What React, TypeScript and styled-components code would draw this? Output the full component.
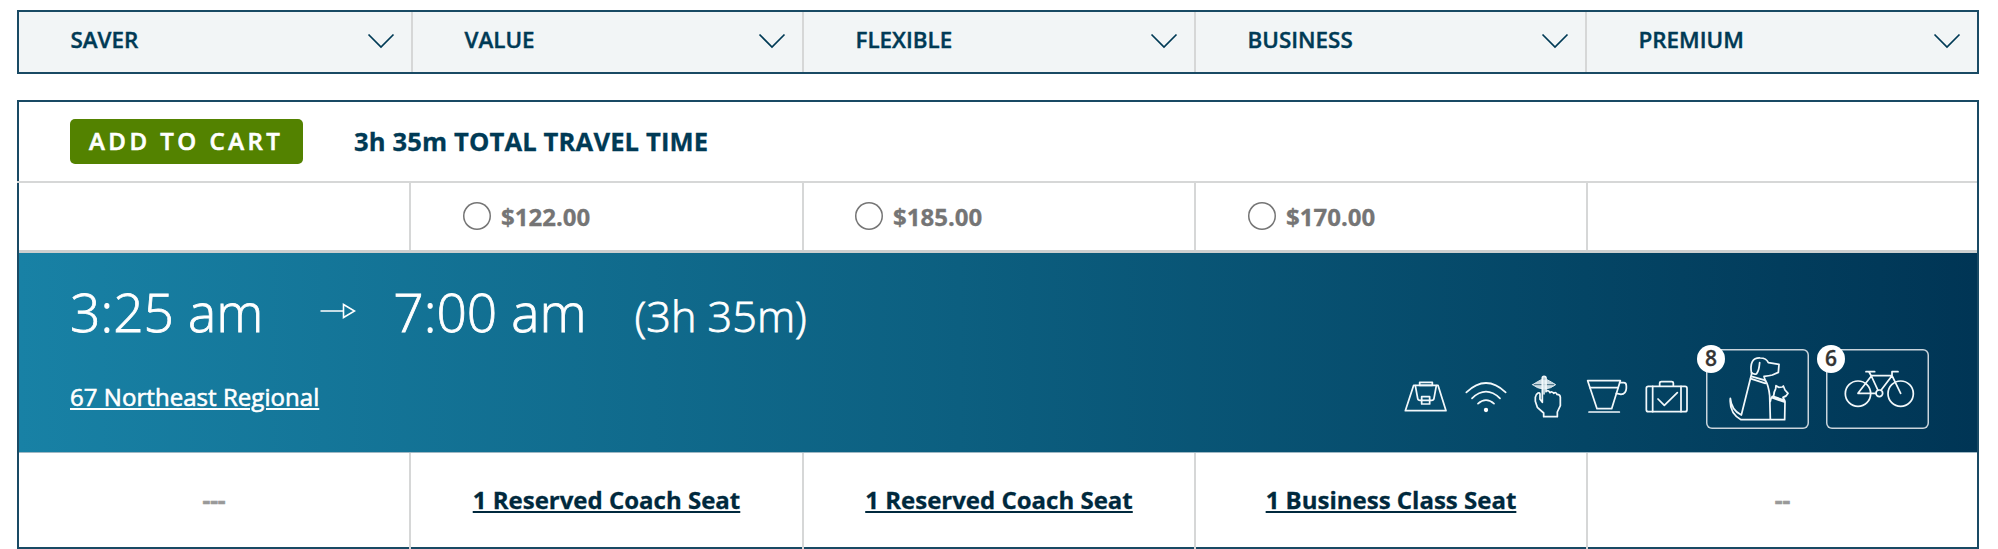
import React from "react";
import styled, { createGlobalStyle } from "styled-components";

const navy = "#003a55";
const rule = "#d6d7d7";

const GlobalStyle = createGlobalStyle`
  *, *::before, *::after { box-sizing: border-box; }
  body {
    margin: 0;
    background: #fff;
    font-family: "Open Sans", "Noto Sans", sans-serif;
    color: ${navy};
    -webkit-text-stroke-width: 0.3px;
  }
`;

const Page = styled.main`
  height: 549px;
  padding: 10px 19px 0 17px;
  overflow: hidden;
`;

const FareHeader = styled.header`
  display: grid;
  grid-template-columns: 394px 391px 392px 391px 1fr;
  height: 64px;
  border: 2px solid #194a64;
  background: #f2f5f6;
`;

const FareTab = styled.button`
  display: flex;
  align-items: center;
  justify-content: space-between;
  padding: 0 16px 5px 51.5px;
  border: 0;
  border-right: 2px solid ${rule};
  background: none;
  color: ${navy};
  font: 600 22.4px/30px "Open Sans", sans-serif;
  -webkit-text-stroke-width: 0.4px;
  &:last-child { border-right: 0; }
`;

const Chevron = styled.svg`
  width: 28px;
  height: 16px;
  margin-top: 3px;
`;

const Trip = styled.section`
  margin-top: 26px;
  height: 449px;
  border: 2px solid #194a64;
  display: flex;
  flex-direction: column;
`;

const Summary = styled.div`
  display: flex;
  align-items: center;
  flex: none;
  height: 81px;
  margin-left: -2px;
  padding: 0 52px 0 53px;
  border-bottom: 2px solid ${rule};
`;

const CartButton = styled.button`
  width: 233px;
  height: 45px;
  margin-bottom: 1px;
  padding: 0 0 1px 19px;
  border: 0;
  border-radius: 5px;
  background: #538200;
  color: #fff;
  font: 600 24px/40px "Open Sans", sans-serif;
  letter-spacing: 3.5px;
  text-align: left;
  white-space: nowrap;
  -webkit-text-stroke-width: 0.6px;
`;

const TravelTime = styled.h2`
  margin: 0 0 0 51px;
  font-size: 25.6px;
  line-height: 34px;
  font-weight: 700;
  letter-spacing: 0.13px;
`;

const ColumnRow = styled.div<{ $height: number }>`
  display: grid;
  grid-template-columns: 392px 393px 392px 392px 1fr;
  flex: none;
  height: ${(p) => p.$height}px;
`;

const PriceRow = styled(ColumnRow)`
  border-bottom: 3px solid #cccfcf;
`;

const PriceCell = styled.label`
  display: flex;
  align-items: center;
  gap: 10px;
  padding: 0 0 1px 52px;
  border-right: 2px solid ${rule};
  color: #757575;
  font-size: 24px;
  font-weight: 700;
  &:nth-child(3) { padding-left: 51px; }
  &:last-child { border-right: 0; }
`;

const Radio = styled.span`
  width: 28px;
  height: 28px;
  box-shadow: inset 0 0 0 1.5px #757575;
  border-radius: 50%;
`;

const Hero = styled.div`
  flex: none;
  height: 200px;
  padding: 0 48px 0 51px;
  background: linear-gradient(90deg, #1881a5 0%, #0c5f80 48%, #044565 80%, #003555 100%);
  border-bottom: 1px solid #9fb8c4;
  color: #fff;
  display: flex;
  justify-content: space-between;
`;

const Schedule = styled.div`
  display: flex;
  flex-direction: column;
  padding-top: 20px;
`;

const Times = styled.div`
  display: flex;
  align-items: baseline;
  font-weight: 300;
  font-size: 53.33px;
  line-height: 78px;
  white-space: nowrap;
  -webkit-text-stroke-width: 0.8px;
`;

const Arrow = styled.svg`
  width: 36px;
  height: 16px;
  margin: 0 37px 7px 57px;
  align-self: center;
`;

const Duration = styled.span`
  margin-left: 48px;
  font-size: 43.2px;
`;

const TrainLink = styled.a`
  margin-top: 25px;
  align-self: flex-start;
  font-size: 24px;
  line-height: 33px;
  letter-spacing: 0.05px;
  text-decoration: underline;
  text-decoration-thickness: 2px;
  text-underline-offset: 2px;
  -webkit-text-stroke-width: 0.6px;
`;

const Amenities = styled.div`
  display: flex;
  margin-top: 96px;
  height: 80px;
`;

const Glyph = styled.svg`
  width: 60px;
  height: 80px;
  fill: none;
  stroke: #f2f8fb;
  stroke-width: 5.2;
  stroke-linejoin: round;
  stroke-linecap: round;
`;

const CountBox = styled.div`
  position: relative;
  width: 103px;
  height: 80px;
  margin-left: 17px;
  box-shadow: inset 0 0 0 1.5px #c9d4dc;
  border-radius: 6px;
  &:first-of-type { margin-left: 10px; }
`;

const BoxGlyph = styled(Glyph)`
  display: block;
  width: 103px;
  height: 80px;
`;

const Count = styled.span`
  position: absolute;
  left: -9px;
  top: -4px;
  width: 28px;
  height: 28px;
  border-radius: 50%;
  background: #fff;
  color: #333;
  font-size: 21px;
  line-height: 27px;
  font-weight: 600;
  text-align: center;
`;

const SeatCell = styled.div`
  display: flex;
  align-items: center;
  justify-content: center;
  padding: 0 0 4px;
  border-right: 2px solid ${rule};
  font-size: 24px;
  font-weight: 700;
  &:last-child { border-right: 0; }
`;

const SeatLink = styled.a`
  color: #00293d;
  text-decoration: underline;
  text-decoration-thickness: 2px;
  text-underline-offset: 2px;
`;

const Unavailable = styled.span`
  color: #999;
  -webkit-text-stroke-width: 0.6px;
`;

const fares = ["SAVER", "VALUE", "FLEXIBLE", "BUSINESS", "PREMIUM"];
const prices = ["", "$122.00", "$185.00", "$170.00", ""];
const seats = ["---", "1 Reserved Coach Seat", "1 Reserved Coach Seat", "1 Business Class Seat", "--"];

const BagIcon = () => (
  <Glyph viewBox="18 27 180 240">
    <path d="M71 136H144L168 212H46Z" />
    <rect x="89" y="127" width="38" height="9" />
    <path d="M76 137L83 175Q84 181 90 181H95M139 137L132 175Q131 181 125 181H120" />
    <rect x="95" y="170" width="24" height="22" />
    <path d="M95 181H119" />
  </Glyph>
);

const WifiIcon = () => (
  <Glyph viewBox="198 27 180 240">
    <path d="M229 157Q288 101 347 157M246 175Q288 135 330 175M264 191Q288 170 312 191" />
    <circle cx="288" cy="210" r="6.5" fill="#fff" stroke="none" />
  </Glyph>
);

const QuietIcon = () => (
  <Glyph viewBox="378 27 180 240">
    <path d="M428 134Q442 125 454 119Q462 126 471 119Q483 125 497 134Q483 146 462 147Q441 146 428 134Z" fill="#c8d9e2" stroke="#dbe8ef" strokeWidth="3" />
    <path d="M433 134H491" stroke="#25536e" strokeWidth="2.5" />
    <path d="M457 187V114Q457 109 462 109Q468 109 468 114V155Q475 148 480 158Q486 153 491 160Q498 155 501 163Q511 163 511 172V197L502 216V230H461V219L442 202L436 184V172Q437 163 444 159Q450 157 450 163V178L457 187Z" />
    <path d="M462 112V162" stroke="#dce9ef" strokeWidth="5" />
  </Glyph>
);

const CafeIcon = () => (
  <Glyph viewBox="558 27 180 240">
    <path d="M593 122H691L665 206H621Z" />
    <path d="M600 143H684" />
    <path d="M689 128H701Q709 128 709 138V145Q708 162 693 163L679 160M597 216H688" />
  </Glyph>
);

const LuggageIcon = () => (
  <Glyph viewBox="738 27 180 240">
    <rect x="769" y="139" width="122" height="76" rx="6" />
    <path d="M788 139V215M873 139V215M809 138V129Q809 125 814 125H845Q850 125 850 129V138" />
    <path d="M804 177L823 196L862 158" />
  </Glyph>
);

const PetsIcon = () => (
  <BoxGlyph viewBox="48 57 309 240">
    <path d="M184 135L154 255Q124 240 121 205Q117 249 153 269H284L285 215" />
    <path d="M185 133Q180 108 187 95Q194 83 211 84Q229 84 235 98L267 103L265 127L247 135Q238 137 222 139L226 153" />
    <path d="M209 98Q207 123 200 131Q193 135 185 128M184 139L226 151M182 146L226 160M226 151Q236 167 239 197L241 267" />
    <path d="M251 198Q252 184 257 176L258 167L266 172L277 171L280 168L285 180L294 190Q290 199 279 202L284 212M249 199L284 211M246 203L283 216M247 199Q242 204 241 214" />
  </BoxGlyph>
);

const BikeIcon = () => (
  <BoxGlyph viewBox="408 57 309 240">
    <circle cx="504" cy="191" r="38" />
    <circle cx="632" cy="191" r="38" />
    <circle cx="568" cy="190" r="10" />
    <path d="M528 125H554M606 125H624M606 125V137L632 190M537 126L544 138L564 181M544 138L504 190H558M544 137H606L573 181" />
  </BoxGlyph>
);

export default function App() {
  return (
    <>
      <GlobalStyle />
      <Page>
        <FareHeader>
          {fares.map((fare) => (
            <FareTab key={fare}>
              {fare}
              <Chevron viewBox="0 0 28 16" fill="none" stroke={navy} strokeWidth="1.7">
                <path d="M1.5 1.5L14 14L26.5 1.5" />
              </Chevron>
            </FareTab>
          ))}
        </FareHeader>
        <Trip>
          <Summary>
            <CartButton>ADD TO CART</CartButton>
            <TravelTime>3h 35m TOTAL TRAVEL TIME</TravelTime>
          </Summary>
          <PriceRow $height={70}>
            {prices.map((price, i) => (
              <PriceCell key={i}>
                {price && <Radio />}
                {price}
              </PriceCell>
            ))}
          </PriceRow>
          <Hero>
            <Schedule>
              <Times>
                <span>3:25 am</span>
                <Arrow viewBox="0 0 36 16" fill="none" stroke="#fff" strokeWidth="1.6">
                  <path d="M0.5 8H23M23.5 1.5V14.5L34.5 8Z" />
                </Arrow>
                <span>7:00 am</span>
                <Duration>(3h 35m)</Duration>
              </Times>
              <TrainLink>67 Northeast Regional</TrainLink>
            </Schedule>
            <Amenities>
              <BagIcon />
              <WifiIcon />
              <QuietIcon />
              <CafeIcon />
              <LuggageIcon />
              <CountBox>
                <PetsIcon />
                <Count>8</Count>
              </CountBox>
              <CountBox>
                <BikeIcon />
                <Count>6</Count>
              </CountBox>
            </Amenities>
          </Hero>
          <ColumnRow $height={96}>
            {seats.map((seat, i) => (
              <SeatCell key={i}>
                {seat.startsWith("-") ? <Unavailable>{seat}</Unavailable> : <SeatLink>{seat}</SeatLink>}
              </SeatCell>
            ))}
          </ColumnRow>
        </Trip>
      </Page>
    </>
  );
}
